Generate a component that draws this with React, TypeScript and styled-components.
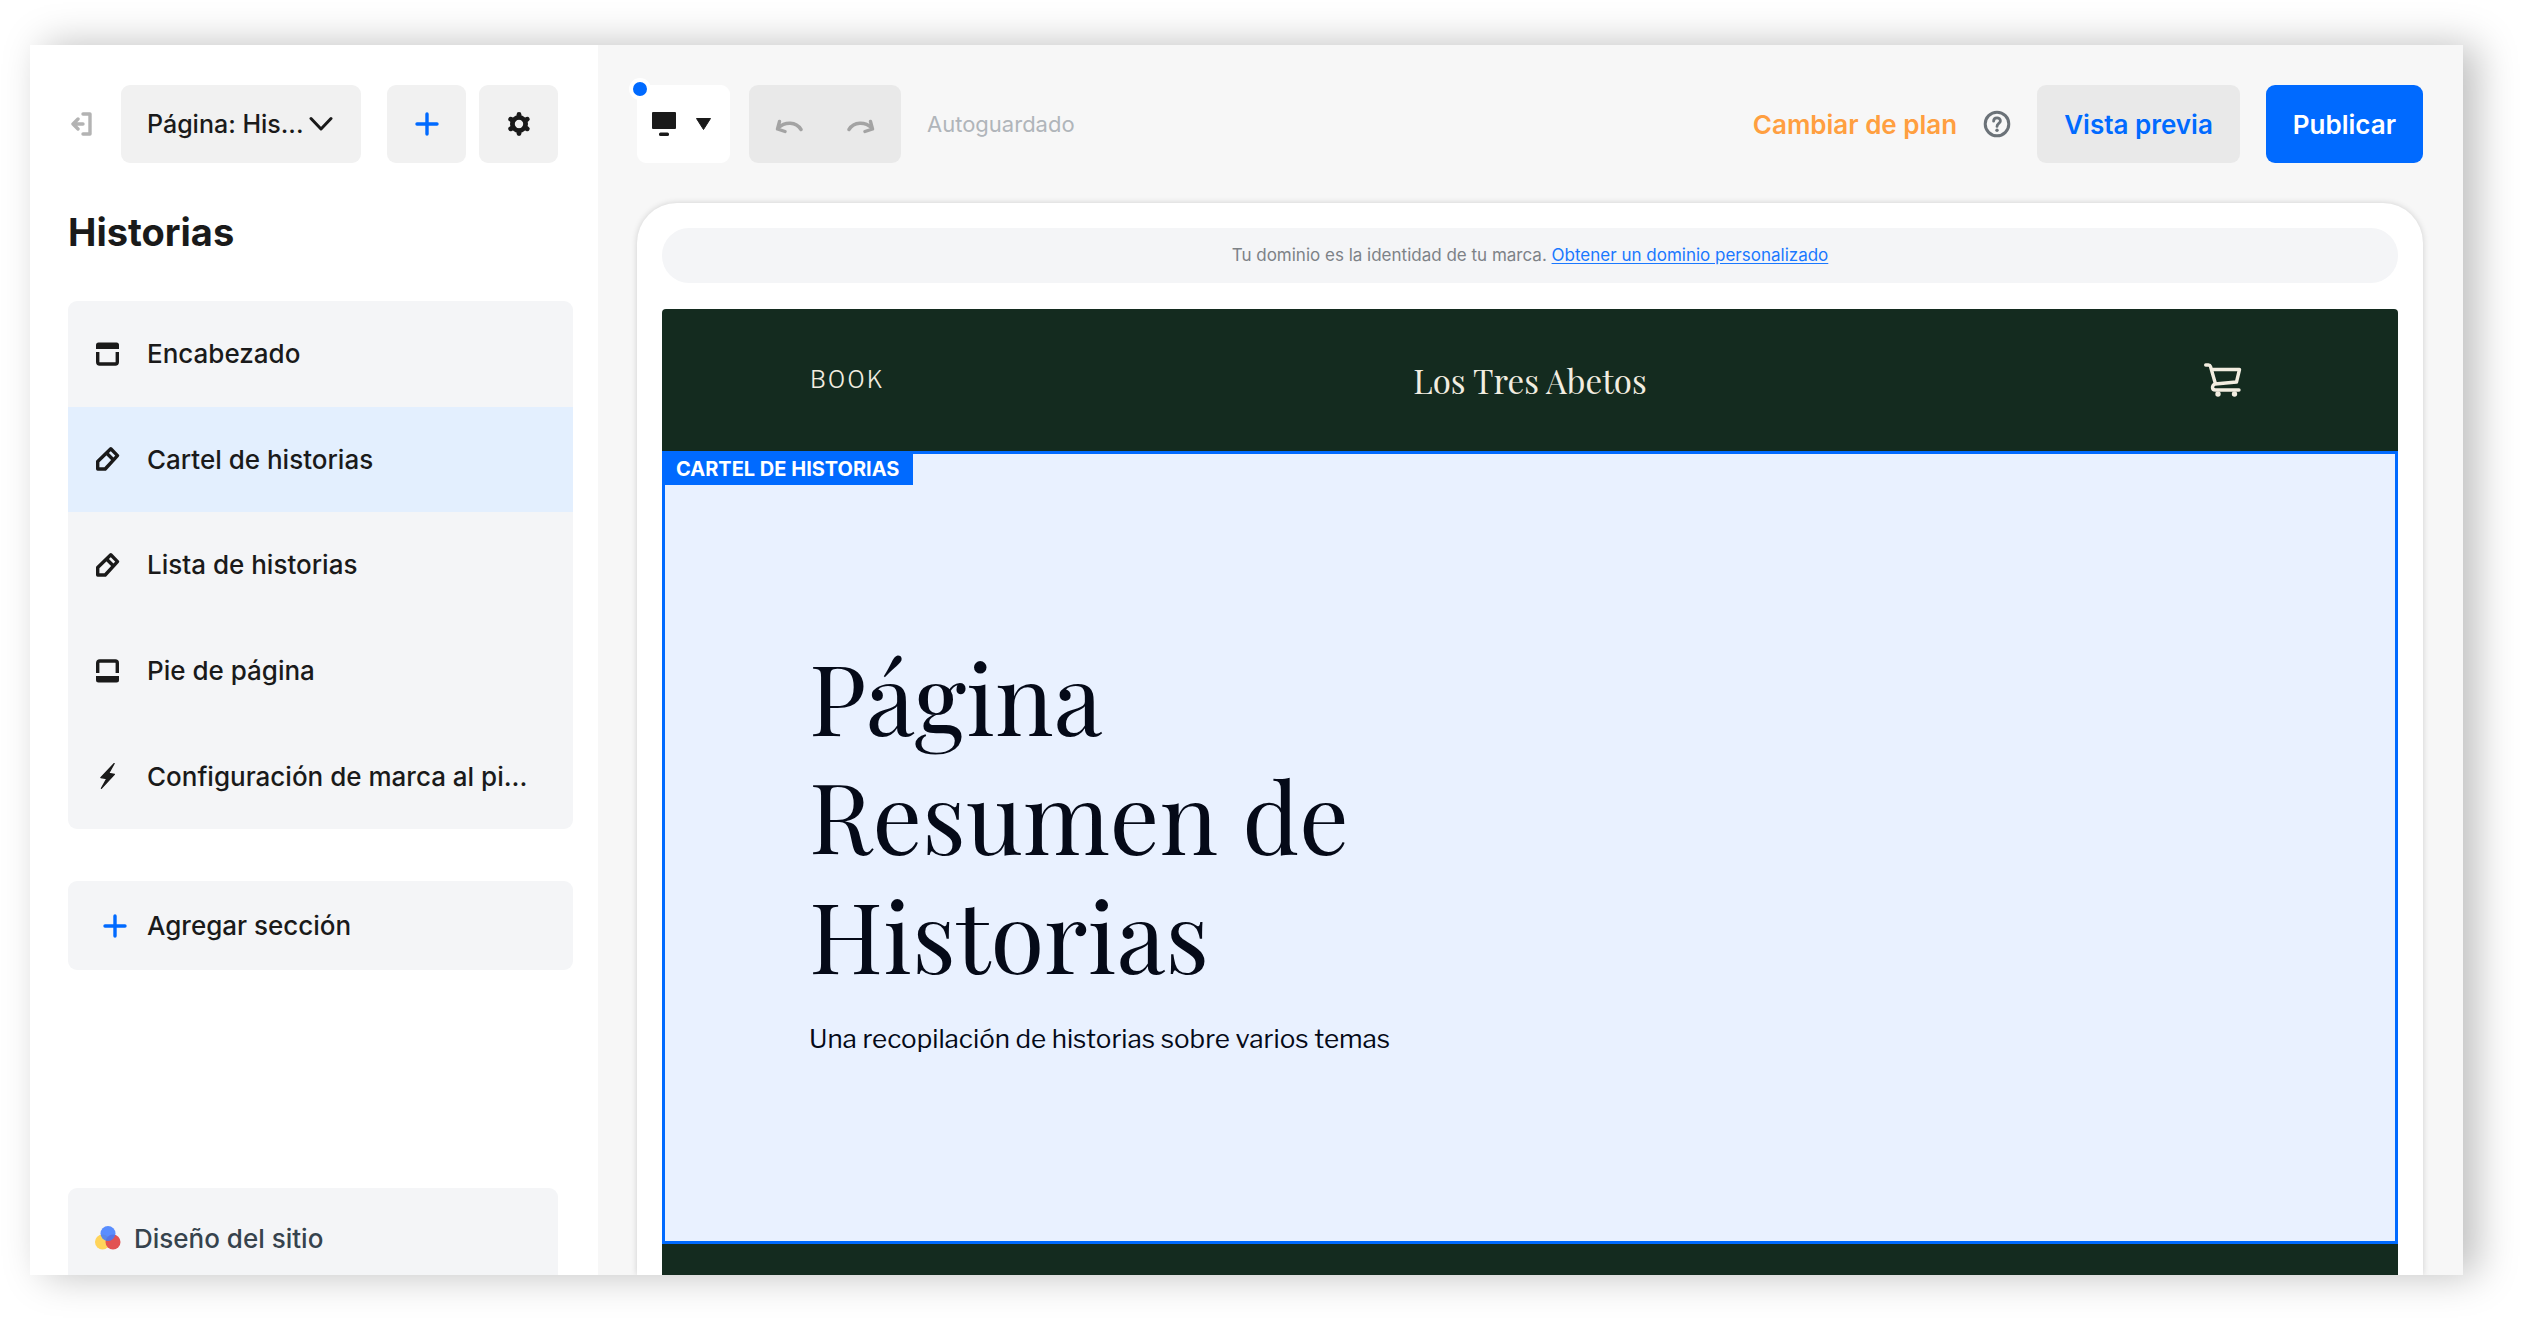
import React from 'react';
import styled, { createGlobalStyle } from 'styled-components';

const color = {
  ink: '#1a1a1a',
  blue: '#006aff',
  orange: '#ff9f40',
  forest: '#142b1f',
  cream: '#f2ede0',
  panel: '#f4f5f7',
  muted: '#b0b5ba',
};

const font = {
  display: '"Playfair Display", "Liberation Serif", serif',
  site: '"Libre Franklin", Roboto, "Liberation Sans", sans-serif',
};

const GlobalStyle = createGlobalStyle`
  *, *::before, *::after { box-sizing: border-box; }
  body {
    margin: 0;
    background: #fff;
    color: ${color.ink};
    font-family: Inter, "Liberation Sans", sans-serif;
    font-size: 26px;
    font-weight: 500;
  }
  button, select {
    margin: 0;
    padding: 0;
    border: 0;
    background: none;
    color: inherit;
    font: inherit;
    cursor: pointer;
  }
  svg { display: block; flex: none; }
`;

const Stage = styled.div`
  height: 100vh;
  padding: 45px 60px 45px 30px;
`;

const Window = styled.div`
  display: flex;
  height: 100%;
  box-shadow: 14px 0 38px rgba(0, 0, 0, 0.26);
`;

/* Sidebar */

const Sidebar = styled.aside`
  display: flex;
  flex: 0 0 568px;
  flex-direction: column;
  overflow: hidden;
  padding: 40px 25px 0 38px;
  background: #fff;
`;

const SidebarBar = styled.div`
  display: flex;
  align-items: stretch;
  height: 78px;
  padding-right: 15px;
`;

const ExitButton = styled.button`
  display: flex;
  align-items: center;
  width: 53px;
  padding-left: 3px;
  color: #b3b3b3;
`;

const PagePicker = styled.label`
  position: relative;
  display: flex;
  flex: 1;
  min-width: 0;
  margin-right: 26px;

  svg {
    position: absolute;
    top: 31px;
    right: 28px;
    pointer-events: none;
  }
`;

const PageSelect = styled.select`
  flex: 1;
  min-width: 0;
  padding: 0 40px 0 26px;
  border-radius: 9px;
  background: #f1f1f1;
  font-size: 25px;
  appearance: none;
`;

const SquareButtons = styled.div`
  display: flex;
  gap: 13px;
`;

const SquareButton = styled.button`
  display: flex;
  align-items: center;
  justify-content: center;
  width: 79px;
  border-radius: 9px;
  background: #f1f1f1;
`;

const PageTitle = styled.h1`
  margin: 45px 0;
  font-size: 38px;
  font-weight: 700;
  line-height: 48px;
`;

const SectionList = styled.ul`
  display: flex;
  flex-direction: column;
  min-height: 528px;
  margin: 0;
  padding: 0;
  overflow: hidden;
  border-radius: 9px;
  background: ${color.panel};
  list-style: none;
`;

const SectionItem = styled.li`
  display: flex;
  flex: 1;
`;

const SectionButton = styled.button<{ $selected?: boolean }>`
  display: flex;
  flex: 1;
  align-items: center;
  gap: 27px;
  padding: 0 28px;
  background: ${(p) => (p.$selected ? '#e3effe' : 'transparent')};
  white-space: nowrap;
`;

const AddSection = styled.button`
  display: flex;
  flex: none;
  align-items: center;
  gap: 20px;
  height: 89px;
  margin-top: 52px;
  padding: 0 35px;
  border-radius: 9px;
  background: ${color.panel};
`;

const SidebarFooter = styled.div`
  height: 87px;
  margin: auto 15px 0 0;
  overflow: hidden;
`;

const DesignButton = styled.button`
  display: flex;
  align-items: center;
  gap: 13px;
  width: 100%;
  height: 100px;
  padding: 0 27px;
  border-radius: 9px;
  background: ${color.panel};
  color: #36434d;
`;

/* Editor */

const Editor = styled.main`
  display: flex;
  flex: 1;
  flex-direction: column;
  min-width: 0;
  padding: 40px 40px 0 39px;
  background: #f7f7f7;
`;

const Toolbar = styled.div`
  display: flex;
  flex: none;
  align-items: center;
  height: 78px;
  margin-bottom: 40px;
`;

const DeviceButton = styled.button`
  position: relative;
  display: flex;
  align-items: center;
  gap: 20px;
  height: 100%;
  margin-right: 19px;
  padding: 0 19px 0 15px;
  border-radius: 9px;
  background: #fff;
`;

const NewDot = styled.span`
  position: absolute;
  top: -7px;
  left: -8px;
  width: 22px;
  height: 22px;
  border: 4px solid #fff;
  border-radius: 50%;
  background: ${color.blue};
`;

const History = styled.div`
  display: flex;
  height: 100%;
  margin-right: 26px;
  padding: 0 4px;
  border-radius: 9px;
  background: #e9e9e9;
`;

const HistoryButton = styled.button`
  display: flex;
  align-items: center;
  justify-content: center;
  width: 72px;
  color: #a3a3a3;
`;

const SaveState = styled.span`
  color: ${color.muted};
  font-size: 22px;
  font-weight: 400;
`;

const Actions = styled.div`
  display: flex;
  align-items: center;
  gap: 26px;
  height: 100%;
  margin-left: auto;
`;

const PlanLink = styled.a`
  color: ${color.orange};
  font-weight: 600;
  text-decoration: none;
`;

const HelpButton = styled.button`
  color: #6b7278;
`;

const ActionButton = styled.button<{ $primary?: boolean }>`
  height: 100%;
  padding: 0 27px;
  border-radius: 9px;
  background: ${(p) => (p.$primary ? color.blue : '#e9e9e9')};
  color: ${(p) => (p.$primary ? '#fff' : color.blue)};
  font-weight: 600;
`;

const Canvas = styled.div`
  display: flex;
  flex: 1;
  flex-direction: column;
  min-height: 0;
  padding: 25px 25px 0;
  border-radius: 40px 40px 0 0;
  background: #fff;
  box-shadow: 0 0 6px rgba(0, 0, 0, 0.16);
  clip-path: inset(-8px -8px 0 -8px);
`;

const DomainBanner = styled.p`
  flex: none;
  margin: 0 0 26px;
  border-radius: 27px;
  background: ${color.panel};
  color: #7d8287;
  font-size: 17px;
  font-weight: 400;
  line-height: 55px;
  text-align: center;

  a { color: #1a78ff; text-underline-offset: 2px; }
`;

const Site = styled.div`
  display: flex;
  flex: 1;
  flex-direction: column;
  min-height: 0;
  overflow: hidden;
  border-radius: 4px 4px 0 0;
  background: ${color.forest};
`;

const SiteHeader = styled.header`
  display: grid;
  flex: none;
  grid-template-columns: 1fr auto 1fr;
  align-items: center;
  height: 142px;
  padding: 0 148px;
  color: ${color.cream};
`;

const SiteNavLink = styled.a`
  justify-self: start;
  color: inherit;
  font-family: ${font.site};
  font-size: 23px;
  font-weight: 300;
  letter-spacing: 2px;
  text-decoration: none;
`;

const SiteName = styled.span`
  font-family: ${font.display};
  font-size: 33px;
  font-weight: 400;
`;

const CartButton = styled.button`
  justify-self: end;
`;

const Hero = styled.section`
  position: relative;
  flex: none;
  padding: 182px 144px;
  border: 3px solid ${color.blue};
  background: #e9f1ff;
  color: #050a18;
`;

const HeroTag = styled.span`
  position: absolute;
  top: 0;
  left: 0;
  padding: 0 14px 0 11px;
  background: ${color.blue};
  color: #fff;
  font-size: 20px;
  font-weight: 700;
  line-height: 31px;
`;

const HeroTitle = styled.h2`
  max-width: 620px;
  margin: 0 0 26px;
  font-family: ${font.display};
  font-size: 98px;
  font-weight: 400;
  line-height: 119px;
`;

const HeroText = styled.p`
  margin: 0;
  font-family: ${font.site};
  font-size: 26px;
  font-weight: 400;
  line-height: 40px;
`;

/* Icons */

const ExitIcon = () => (
  <svg width="21" height="24" viewBox="0 0 21 24" fill="none" stroke="currentColor" strokeWidth="3.4" strokeLinecap="round" strokeLinejoin="round">
    <path d="M12 2H19V22H12M2 12H12M7 7L2 12L7 17" />
  </svg>
);

const ChevronIcon = () => (
  <svg width="24" height="16" viewBox="0 0 24 16" fill="none" stroke="currentColor" strokeWidth="3" strokeLinecap="round" strokeLinejoin="round">
    <path d="M2 2.5L12 13L22 2.5" />
  </svg>
);

const PlusIcon = () => (
  <svg width="24" height="24" viewBox="0 0 24 24" fill="none" stroke={color.blue} strokeWidth="3.4" strokeLinecap="round">
    <path d="M12 2V22M2 12H22" />
  </svg>
);

const GearIcon = () => (
  <svg width="24" height="24" viewBox="0 0 24 24" fill="none" stroke="currentColor">
    <circle cx="12" cy="12" r="6.6" strokeWidth="4.8" />
    {[0, 60, 120, 180, 240, 300].map((angle) => (
      <path key={angle} d="M12 5V2.4" strokeWidth="4.8" strokeLinecap="round" transform={`rotate(${angle} 12 12)`} />
    ))}
  </svg>
);

const HeaderIcon = () => (
  <svg width="24" height="24" viewBox="0 0 24 24">
    <path d="M0 7V3Q0 0.5 2.5 0.5H20.5Q23 0.5 23 3V7Z" fill="currentColor" />
    <path d="M1.7 10V20Q1.7 22 3.7 22H19.3Q21.3 22 21.3 20V10" fill="none" stroke="currentColor" strokeWidth="3.4" />
  </svg>
);

const FooterIcon = () => (
  <svg width="24" height="24" viewBox="0 0 24 24">
    <path d="M0 17V21Q0 23.5 2.5 23.5H20.5Q23 23.5 23 21V17Z" fill="currentColor" />
    <path d="M1.7 14V4Q1.7 2 3.7 2H19.3Q21.3 2 21.3 4V14" fill="none" stroke="currentColor" strokeWidth="3.4" />
  </svg>
);

const PencilIcon = () => (
  <svg width="24" height="24" viewBox="0 0 24 24" fill="none" stroke="currentColor" strokeWidth="3.4" strokeLinejoin="round">
    <path d="M1.7 22V14.4L14.8 1.8L21.5 8.6L9.2 22Z" />
    <path d="M10.5 6L17.5 13" />
  </svg>
);

const BoltIcon = () => (
  <svg width="24" height="26" viewBox="0 -1 24 26" fill="currentColor" stroke="currentColor" strokeWidth="1.2" strokeLinejoin="round">
    <path d="M18.2 -0.5L4.8 13.6L10.8 14.6L5.4 24.4L18.4 10.3L12.8 9.3Z" />
  </svg>
);

const DesignIcon = () => (
  <svg width="26" height="24" viewBox="0 0 26 24">
    <circle cx="7.5" cy="16" r="7.5" fill="#ffd45a" />
    <circle cx="18" cy="16" r="7.5" fill="#e25252" />
    <circle cx="13" cy="7.5" r="7.5" fill="#3f7cff" fillOpacity="0.86" />
  </svg>
);

const MonitorIcon = () => (
  <svg width="24" height="24" viewBox="0 0 24 24" fill="currentColor">
    <rect width="24" height="17" rx="1" />
    <rect x="7" y="20.5" width="10" height="3.5" rx="1.5" />
  </svg>
);

const CaretIcon = () => (
  <svg width="15" height="12" viewBox="0 0 15 12" fill="currentColor">
    <path d="M0.5 0.5H14.5L7.5 11.5Z" stroke="currentColor" strokeLinejoin="round" />
  </svg>
);

const UndoIcon = ({ flipped }: { flipped?: boolean }) => (
  <svg width="28" height="20" viewBox="0 0 28 20" fill="none" stroke="currentColor" strokeWidth="3.4" strokeLinecap="round" strokeLinejoin="round">
    <g transform={flipped ? 'translate(28 0) scale(-1 1)' : undefined}>
      <path d="M26 15.5C21 7.5 10 7.5 3 14M4.5 7.5L2.5 15L10 17.5" />
    </g>
  </svg>
);

const HelpIcon = () => (
  <svg width="28" height="28" viewBox="0 0 28 28" fill="none" stroke="currentColor" strokeWidth="3">
    <circle cx="14" cy="14" r="11.8" />
    <path d="M10.6 11.2C10.6 6.9 17.4 6.9 17.4 11C17.4 13.6 14 13.4 14 16.4" strokeWidth="2.8" strokeLinecap="round" />
    <circle cx="14" cy="20.3" r="1.7" fill="currentColor" stroke="none" />
  </svg>
);

const CartIcon = () => (
  <svg width="46" height="36" viewBox="0 0 46 36" fill="none" stroke="currentColor" strokeWidth="3.4" strokeLinecap="round" strokeLinejoin="round">
    <path d="M1.7 3H4.5Q6 3 6.5 4.5L11.5 22M8 7.5H35.5L32.5 20L11 22Q8.5 23 8.5 25.5T11.5 28H35" />
    <circle cx="14" cy="32" r="2.7" fill="currentColor" stroke="none" />
    <circle cx="30.5" cy="32" r="2.7" fill="currentColor" stroke="none" />
  </svg>
);

const sections = [
  { name: 'Encabezado', Icon: HeaderIcon },
  { name: 'Cartel de historias', Icon: PencilIcon, selected: true },
  { name: 'Lista de historias', Icon: PencilIcon },
  { name: 'Pie de página', Icon: FooterIcon },
  { name: 'Configuración de marca al pi...', Icon: BoltIcon },
];

export default function App() {
  return (
    <>
      <GlobalStyle />
      <Stage>
        <Window>
          <Sidebar>
            <SidebarBar>
              <ExitButton aria-label="Salir"><ExitIcon /></ExitButton>
              <PagePicker>
                <PageSelect aria-label="Página">
                  <option>Página: His...</option>
                </PageSelect>
                <ChevronIcon />
              </PagePicker>
              <SquareButtons>
                <SquareButton aria-label="Agregar"><PlusIcon /></SquareButton>
                <SquareButton aria-label="Configuración"><GearIcon /></SquareButton>
              </SquareButtons>
            </SidebarBar>
            <PageTitle>Historias</PageTitle>
            <SectionList>
              {sections.map(({ name, Icon, selected }) => (
                <SectionItem key={name}>
                  <SectionButton $selected={selected}><Icon />{name}</SectionButton>
                </SectionItem>
              ))}
            </SectionList>
            <AddSection><PlusIcon />Agregar sección</AddSection>
            <SidebarFooter>
              <DesignButton><DesignIcon />Diseño del sitio</DesignButton>
            </SidebarFooter>
          </Sidebar>

          <Editor>
            <Toolbar>
              <DeviceButton aria-label="Vista de escritorio" aria-haspopup="menu">
                <NewDot />
                <MonitorIcon />
                <CaretIcon />
              </DeviceButton>
              <History>
                <HistoryButton aria-label="Deshacer"><UndoIcon /></HistoryButton>
                <HistoryButton aria-label="Rehacer"><UndoIcon flipped /></HistoryButton>
              </History>
              <SaveState>Autoguardado</SaveState>
              <Actions>
                <PlanLink href="#plan">Cambiar de plan</PlanLink>
                <HelpButton aria-label="Ayuda"><HelpIcon /></HelpButton>
                <ActionButton>Vista previa</ActionButton>
                <ActionButton $primary>Publicar</ActionButton>
              </Actions>
            </Toolbar>

            <Canvas>
              <DomainBanner>
                Tu dominio es la identidad de tu marca. <a href="#dominio">Obtener un dominio personalizado</a>
              </DomainBanner>
              <Site>
                <SiteHeader>
                  <SiteNavLink href="#book">BOOK</SiteNavLink>
                  <SiteName>Los Tres Abetos</SiteName>
                  <CartButton aria-label="Carrito"><CartIcon /></CartButton>
                </SiteHeader>
                <Hero>
                  <HeroTag>CARTEL DE HISTORIAS</HeroTag>
                  <HeroTitle>Página Resumen de Historias</HeroTitle>
                  <HeroText>Una recopilación de historias sobre varios temas</HeroText>
                </Hero>
              </Site>
            </Canvas>
          </Editor>
        </Window>
      </Stage>
    </>
  );
}
